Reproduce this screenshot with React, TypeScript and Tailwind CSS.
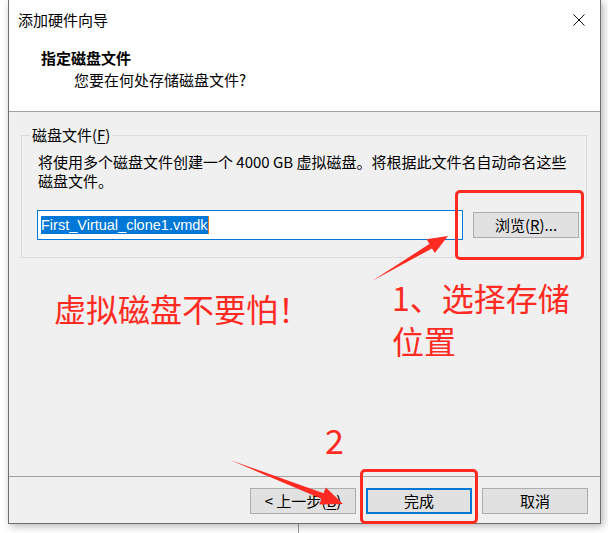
import React from 'react'

const RED = '#ff2a22'

function Underlined({ children }: { children: string }) {
  return <span className="underline underline-offset-[2px] decoration-1">{children}</span>
}

function CloseIcon() {
  return (
    <svg width="12" height="12" viewBox="0 0 12 12" className="block">
      <path d="M0.5 0.5 L11.5 11.5 M11.5 0.5 L0.5 11.5" stroke="#111" strokeWidth="1" fill="none" />
    </svg>
  )
}

function WinButton({ children, primary = false }: { children: React.ReactNode; primary?: boolean }) {
  return (
    <button
      type="button"
      className={
        primary
          ? 'flex h-[26px] w-[106px] items-center justify-center border-2 border-[#0078d7] bg-[#e1e1e1] text-[15px] text-black'
          : 'flex h-[26px] w-[106px] items-center justify-center border border-[#adadad] bg-[#e1e1e1] text-[15px] text-black'
      }
    >
      {children}
    </button>
  )
}

function Annotations() {
  return (
    <div className="pointer-events-none absolute inset-0 z-20">
      {/* red boxes */}
      <div className="absolute left-[455px] top-[190px] h-[70px] w-[129px] rounded-[5px] border-[3px] border-[#ff2a22]" />
      <div className="absolute left-[360px] top-[469px] h-[55px] w-[118px] rounded-[5px] border-[3px] border-[#ff2a22]" />

      {/* arrows */}
      <svg width="608" height="533" className="absolute left-0 top-0">
        <polygon points="372,281 432,248.4 434.8,253.1 448,236 426.6,239.3 429.4,244" fill={RED} />
        <polygon points="230,460 321.4,498.8 319.2,504.4 343,504 325.8,487.6 323.6,493.2" fill={RED} />
      </svg>

      <p className="absolute left-[54px] top-[287px] whitespace-nowrap text-[32px] leading-[43px] text-[#ff2a22]">
        虚拟磁盘不要怕！
      </p>
      <p className="absolute left-[392px] top-[276px] w-[200px] text-[32px] leading-[43px] text-[#ff2a22]">
        1、选择存储
        <br />
        位置
      </p>
      <p className="absolute left-[325px] top-[420px] text-[34px] leading-[40px] text-[#ff2a22]">2</p>
    </div>
  )
}

export default function App() {
  return (
    <div className="relative h-[533px] w-[608px] overflow-hidden bg-white font-['Noto_Sans_CJK_SC',sans-serif] text-[15px] text-black">
      {/* edge of the window behind */}
      <div className="absolute left-[298px] top-[520px] h-[13px] w-px bg-[#9a9a9a]" />

      <div className="relative z-10 ml-[8px] flex h-[524px] w-[593px] flex-col border-x border-b border-[#6f6f6f] bg-[#f0f0f0] shadow-[2px_2px_8px_rgba(0,0,0,0.3)]">
        {/* title bar */}
        <div className="flex h-[40px] items-center justify-between bg-white pl-[9px] pr-[15px]">
          <span className="leading-[20px]">添加硬件向导</span>
          <CloseIcon />
        </div>

        {/* header */}
        <div className="h-[72px] border-b border-[#a0a0a0] bg-white pl-[32px] pt-[8px]">
          <p className="font-bold leading-[20px]">指定磁盘文件</p>
          <p className="mt-[2px] pl-[33px] leading-[20px]">您要在何处存储磁盘文件?</p>
        </div>

        {/* body */}
        <div className="flex-1 pl-[12px]">
          <fieldset className="mt-[13px] w-[566px] border border-[#dcdcdc] pb-[17px]">
            <legend className="ml-[8px] px-[2px] leading-[20px]">
              磁盘文件(<Underlined>F</Underlined>)
            </legend>
            <p className="pl-[16px] pt-[7px] leading-[19px]">
              将使用多个磁盘文件创建一个 4000 GB 虚拟磁盘。将根据此文件名自动命名这些
              <br />
              磁盘文件。
            </p>
            <div className="mt-[20px] flex items-center gap-[10px] pl-[15px]">
              <div className="flex h-[30px] w-[426px] items-center border border-[#0078d7] bg-white pl-[3px]">
                <span className="bg-[#0078d7] font-['Liberation_Sans',sans-serif] text-[14.5px] leading-[18px] text-white">
                  First_Virtual_clone1.vmdk
                </span>
                <span className="h-[18px] w-px bg-[#e07a1f]" />
              </div>
              <WinButton>
                浏览(<Underlined>R</Underlined>)...
              </WinButton>
            </div>
          </fieldset>
        </div>

        {/* footer */}
        <div className="flex h-[47px] justify-end gap-[10px] border-t border-[#a0a0a0] pr-[12px] pt-[11px]">
          <WinButton>
            &lt; 上一步(<Underlined>B</Underlined>)
          </WinButton>
          <WinButton primary>完成</WinButton>
          <WinButton>取消</WinButton>
        </div>
      </div>

      <Annotations />
    </div>
  )
}
